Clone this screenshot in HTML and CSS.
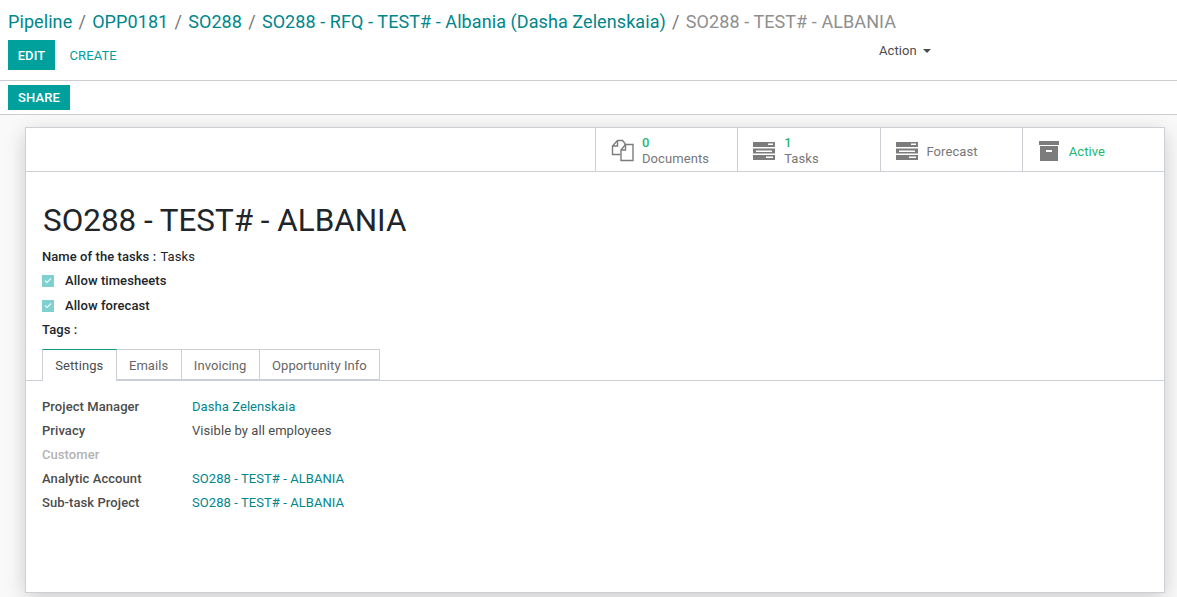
FILE: index.html
```html
<!DOCTYPE html>
<html lang="en">
<head>
<meta charset="utf-8">
<title>SO288 - TEST# - ALBANIA</title>
<link rel="stylesheet" href="styles.css">
</head>
<body>
<header class="control-panel">
  <ol class="breadcrumb">
    <li><a>Pipeline</a></li>
    <li><a>OPP0181</a></li>
    <li><a>SO288</a></li>
    <li><a>SO288 - RFQ - TEST# - Albania (Dasha Zelenskaia)</a></li>
    <li class="current">SO288 - TEST# - ALBANIA</li>
  </ol>
  <div class="actions">
    <button class="btn primary edit">EDIT</button>
    <button class="btn link">CREATE</button>
    <div class="action-menu">Action <span class="caret"></span></div>
  </div>
</header>
<div class="statusbar">
  <button class="btn primary share">SHARE</button>
</div>
<main class="content">
  <section class="sheet">
    <div class="button-box">
      <div class="stat">
        <svg class="stat-icon docs" width="24" height="24" viewBox="0 0 24 24" fill="none" stroke="#7c7c7c" stroke-width="1.4"><path d="M6.500 2.500h5l2.500 3v3M6.500 2.500L1.500 8v8.500h8"/><path d="M6.500 2.500V8h-5"/><path d="M14.500 6.500h7.500v16H10v-10.500z" fill="#fff"/><path d="M14.500 6.500V12H10"/></svg>
        <div class="stat-text two"><span class="num">0</span><span>Documents</span></div>
      </div>
      <div class="stat">
        <svg class="stat-icon" width="22" height="20" viewBox="0 0 22 20"><path class="tasks-shape" fill-rule="evenodd" d="M0 1h22v5H0zM15 2.500v1.500h5v-1.500zM0 7.500h22v5H0zM3 9.500v1.500h16v-1.500zM0 14h22v5H0zM13 15.500v1.500h7v-1.500z"/></svg>
        <div class="stat-text two"><span class="num">1</span><span>Tasks</span></div>
      </div>
      <div class="stat">
        <svg class="stat-icon" width="22" height="20" viewBox="0 0 22 20"><path class="tasks-shape" fill-rule="evenodd" d="M0 1h22v5H0zM15 2.500v1.500h5v-1.500zM0 7.500h22v5H0zM3 9.500v1.500h16v-1.500zM0 14h22v5H0zM13 15.500v1.500h7v-1.500z"/></svg>
        <div class="stat-text"><span>Forecast</span></div>
      </div>
      <div class="stat">
        <svg class="stat-icon" width="22" height="20" viewBox="0 0 22 20"><path class="tasks-shape" fill-rule="evenodd" d="M1 0h20v4H1zM2 5h18v15H2zM8 9v2h6V9z"/></svg>
        <div class="stat-text"><span class="active">Active</span></div>
      </div>
    </div>
    <div class="sheet-body">
      <h1 class="title">SO288 - TEST# - ALBANIA</h1>
      <div class="inline-field"><b>Name of the tasks :</b> <span class="value">Tasks</span></div>
      <label class="check"><span class="box"><svg width="8" height="7" viewBox="0 0 8 7"><path d="M1 3.500l2 2 4-4" fill="none" stroke="#fff" stroke-opacity=".75" stroke-width="1.400"/></svg></span><b>Allow timesheets</b></label>
      <label class="check"><span class="box"><svg width="8" height="7" viewBox="0 0 8 7"><path d="M1 3.500l2 2 4-4" fill="none" stroke="#fff" stroke-opacity=".75" stroke-width="1.400"/></svg></span><b>Allow forecast</b></label>
      <div class="inline-field tags"><b>Tags :</b></div>
    </div>
    <nav class="tabs">
      <a class="tab selected">Settings</a>
      <a class="tab">Emails</a>
      <a class="tab">Invoicing</a>
      <a class="tab">Opportunity Info</a>
    </nav>
    <dl class="fields">
      <dt>Project Manager</dt><dd class="lnk">Dasha Zelenskaia</dd>
      <dt>Privacy</dt><dd>Visible by all employees</dd>
      <dt class="muted">Customer</dt><dd></dd>
      <dt>Analytic Account</dt><dd class="lnk">SO288 - TEST# - ALBANIA</dd>
      <dt>Sub-task Project</dt><dd class="lnk">SO288 - TEST# - ALBANIA</dd>
    </dl>
  </section>
</main>
</body>
</html>
```
FILE: styles.css
```css
* { box-sizing: border-box; }
html, body { height: 100%; }
body {
  margin: 0;
  height: 597px;
  overflow: hidden;
  background: #f9f9f9;
  font-family: Roboto, "Liberation Sans", sans-serif;
  font-size: 13px;
  letter-spacing: .07px;
  color: #4c4c4c;
}
.control-panel {
  height: 81px;
  background: #fff;
  border-bottom: 1px solid #ccc;
  padding: 10px 8px 0;
}
.breadcrumb {
  list-style: none;
  margin: 0;
  padding: 0;
  display: flex;
  font-size: 18px;
  letter-spacing: .08px;
  line-height: 24px;
  height: 24px;
  white-space: nowrap;
}
.breadcrumb a { color: #00868b; }
.breadcrumb li + li::before { content: "/"; padding: 0 6.200px; color: #777; }
.breadcrumb .current { color: #8f8f8f; }
.actions { display: flex; align-items: flex-start; margin-top: 6px; position: relative; }
.btn {
  border: 0;
  font-family: inherit;
  font-size: 13px;
  letter-spacing: .1px;
  font-weight: 400;
  padding: 0;
  cursor: pointer;
}
.primary { background: #00a09d; color: #fff; font-weight: 500; }
.edit { width: 47px; height: 30px; }
.share { width: 62px; height: 25px; }
.link { background: none; color: #00a09d; margin-left: 14.500px; height: 30px; }
.action-menu { position: absolute; left: 871px; top: 3px; line-height: 16px; color: #4c4c4c; }
.caret {
  display: inline-block;
  width: 0; height: 0;
  margin-left: 3px;
  vertical-align: 2px;
  border: 4px solid transparent;
  border-top-color: #4c4c4c;
  border-bottom: 0;
}
.statusbar {
  height: 34px;
  background: #fff;
  border-bottom: 1px solid #ccd0d5;
  padding: 4px 8px 0;
}
.content { padding: 12px 12px 0 25px; }
.sheet {
  height: 466px;
  background: #fff;
  border: 1px solid #ccd0d5;
  box-shadow: 0 5px 20px -1px rgba(0,0,0,.2);
}
.button-box {
  display: flex;
  justify-content: flex-end;
  height: 44px;
  border-bottom: 1px solid #ccd0d5;
}
.stat {
  width: 142.250px;
  border-left: 1px solid #ccd0d5;
  display: flex;
  align-items: center;
  padding: 3px 0 0 15px;
  gap: 9px;
  color: #777;
  line-height: 15px;
}
.stat-icon { flex: none; }
.stat .docs { margin-top: -3px; margin-right: -2px; }
.tasks-shape { fill: #7c7c7c; }
.stat-text { display: flex; flex-direction: column; }
.stat-text.two { margin-top: -2px; }
.num { color: #2bb673; font-weight: 500; margin-bottom: 1px; }
.active { color: #21b573; }
.sheet-body { padding: 31px 16px 0; color: #212529; }
.title {
  margin: 0 0 9px 1px;
  font-size: 31.400px;
  letter-spacing: 0;
  font-weight: 400;
  line-height: 36px;
  color: #212529;
}
.inline-field { line-height: 18px; height: 18px; }
.inline-field b, .check b { font-weight: 500; }
.inline-field .value { margin-left: 1px; }
.check { display: flex; align-items: center; height: 25px; margin-top: 2px; }
.check + .check { margin-top: 0; }
.box {
  width: 12px; height: 12px;
  background: #7fd0d0;
  margin-right: 11px;
  display: flex;
  align-items: center;
  justify-content: center;
}
.tags { margin-top: 3px; }
.tabs {
  display: flex;
  margin-top: 10px;
  padding-left: 16px;
  height: 32px;
  border-bottom: 1px solid #ccd0d5;
}
.tab {
  height: 31px;
  padding: 0 12.300px;
  line-height: 32px;
  border: 1px solid #ccd0d5;
  border-left: 0;
  color: #666;
}
.tab.selected {
  height: 32px;
  border-left: 1px solid #ccd0d5;
  border-top: 1px solid #149a80;
  background: #fff;
  border-bottom: 0;
  color: #4c4c4c;
}
.fields {
  margin: 14px 0 0 16px;
  display: grid;
  grid-template-columns: 150px 1fr;
  grid-auto-rows: 24px;
  line-height: 24px;
}
.fields dt { font-weight: 500; color: #4c4c4c; }
.fields dd { margin: 0; color: #4c4c4c; }
.fields .muted { color: #b3b3b3; }
.fields .lnk { color: #00868b; }
```
